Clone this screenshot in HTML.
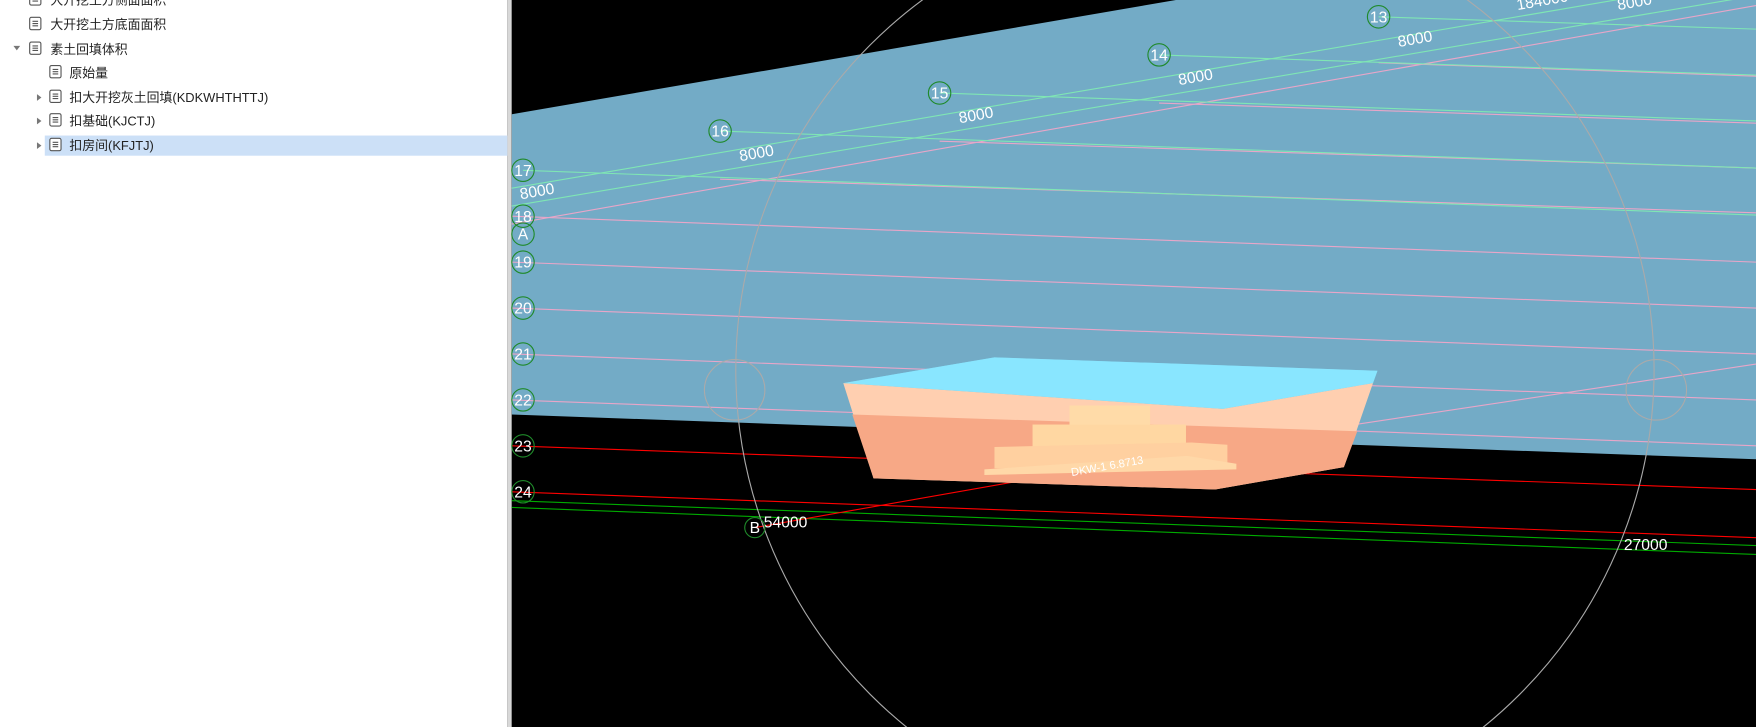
<!DOCTYPE html>
<html><head><meta charset="utf-8"><style>
html,body{margin:0;padding:0;width:1756px;height:727px;overflow:hidden;background:#000}
svg{display:block;overflow:hidden}
.t{font-family:"Liberation Sans","Noto Sans CJK SC",sans-serif;font-size:11.5px;fill:#222}
.n{font-family:"Liberation Sans",sans-serif;font-size:14px;fill:#fff}
</style></head><body>
<svg width="1756" height="727" viewBox="0 0 1568 649" preserveAspectRatio="none" xmlns="http://www.w3.org/2000/svg">
<defs>
<g id="ic"><rect x="0.5" y="0.5" width="10" height="11" rx="1.5" fill="#fff" stroke="#555"/><path d="M3 4h5M3 6h5M3 8h5" stroke="#555"/></g>
</defs>
<rect x="0" y="0" width="453" height="649" fill="#fff"/>
<rect x="453" y="0" width="4" height="649" fill="#d8d8d8"/>
<rect x="40" y="121" width="413" height="18" fill="#cce0f7"/>
<use href="#ic" x="26" y="-7"/><text class="t" x="45" y="4">大开挖土方侧面面积</text>
<use href="#ic" x="26" y="15"/><text class="t" x="45" y="26">大开挖土方底面面积</text>
<path d="M12 41l6 0l-3 4z" fill="#777"/>
<use href="#ic" x="26" y="37"/><text class="t" x="45" y="48">素土回填体积</text>
<use href="#ic" x="44" y="58"/><text class="t" x="62" y="69">原始量</text>
<path d="M33 84l4 3l-4 3z" fill="#777"/>
<use href="#ic" x="44" y="80"/><text class="t" x="62" y="91">扣大开挖灰土回填(KDKWHTHTTJ)</text>
<path d="M33 105l4 3l-4 3z" fill="#777"/>
<use href="#ic" x="44" y="101"/><text class="t" x="62" y="112">扣基础(KJCTJ)</text>
<path d="M33 127l4 3l-4 3z" fill="#777"/>
<use href="#ic" x="44" y="123"/><text class="t" x="62" y="134">扣房间(KFJTJ)</text>

<rect x="457" y="0" width="1111" height="649" fill="#000"/>
<polygon points="457,102 1050,0 1568,0 1568,410 457,370" fill="#73abc6"/>
<g stroke="#e8a6c8" stroke-width="1">
<line x1="457" y1="193" x2="1568" y2="234"/>
<line x1="457" y1="234" x2="1568" y2="275"/>
<line x1="457" y1="275" x2="1568" y2="316"/>
<line x1="457" y1="316" x2="1568" y2="357"/>
<line x1="457" y1="357" x2="1568" y2="398"/>
<line x1="643" y1="160" x2="1568" y2="190"/>
<line x1="839" y1="126" x2="1568" y2="150"/>
<line x1="1035" y1="92" x2="1568" y2="110"/>
<line x1="1231" y1="56" x2="1568" y2="68"/>
<line x1="457" y1="200" x2="1568" y2="5"/>
<line x1="1170" y1="385" x2="1568" y2="325"/>
</g>
<g stroke="#7fe6b4" stroke-width="1">
<line x1="467" y1="152" x2="1568" y2="192"/>
<line x1="643" y1="117" x2="1568" y2="150"/>
<line x1="839" y1="83" x2="1568" y2="108"/>
<line x1="1035" y1="49" x2="1568" y2="67"/>
<line x1="1231" y1="15" x2="1568" y2="26"/>
<line x1="457" y1="168" x2="1560" y2="-20"/>
<line x1="457" y1="184" x2="1568" y2="-4"/>
</g>
<g stroke-width="1">
<line x1="457" y1="398" x2="1568" y2="437" stroke="#f00"/>
<line x1="457" y1="439" x2="1568" y2="480" stroke="#f00"/>
<line x1="457" y1="447" x2="1568" y2="487" stroke="#0a0"/>
<line x1="457" y1="453" x2="1568" y2="495" stroke="#0a0"/>
<line x1="674" y1="471" x2="935" y2="425" stroke="#f00"/>
<line x1="838" y1="410" x2="1120" y2="420" stroke="#f00"/>
</g>
<g fill="none" stroke="#aaa" stroke-width="1">
<circle cx="1067" cy="330" r="410"/>
<circle cx="656" cy="348" r="27"/>
<circle cx="1479" cy="348" r="27"/>
</g>
<polygon points="753,342 888,319 1230,331 1226,342 1092,365" fill="#80e4ff"/>
<polygon points="753,342 1092,365 1226,342 1200,417 1085,437 780,427" fill="#ffcfb0"/>
<polygon points="761,370 1212,385 1200,417 1085,437 780,427" fill="#f7a886"/>
<polygon points="753,342 888,319 1230,331 1226,342 1092,365" fill="#8fe8ff" opacity="0.6"/>
<rect x="955" y="362" width="72" height="22" fill="#ffdba8"/>
<rect x="922" y="379" width="137" height="25" fill="#ffd7a2"/>
<polygon points="888,399 1064,395 1096,397 1096,418 888,418" fill="#ffd0a0"/>
<polygon points="879,419 1060,407 1104,414 1104,419 879,424" fill="#ffd8a8"/>
<text x="957" y="425" transform="rotate(-10 957 425)" style="font-family:'Liberation Sans',sans-serif;font-size:10px;fill:#fff">DKW-1 6.8713</text>
<g class="n">
<text x="465" y="178" transform="rotate(-10 465 178)">8000</text>
<text x="661" y="144" transform="rotate(-10 661 144)">8000</text>
<text x="857" y="110" transform="rotate(-10 857 110)">8000</text>
<text x="1053" y="76" transform="rotate(-10 1053 76)">8000</text>
<text x="1249" y="42" transform="rotate(-10 1249 42)">8000</text>
<text x="1445" y="9" transform="rotate(-10 1445 9)">8000</text>
<text x="1355" y="9" transform="rotate(-10 1355 9)">184000</text>
<text x="682" y="471">54000</text>
<text x="1450" y="491">27000</text>
</g>
<g fill="none" stroke="#1f8a2a" stroke-width="1">
<circle cx="1231" cy="15" r="10"/><circle cx="1035" cy="49" r="10"/><circle cx="839" cy="83" r="10"/><circle cx="643" cy="117" r="10"/>
<circle cx="467" cy="152" r="10"/><circle cx="467" cy="193" r="10"/><circle cx="467" cy="209" r="10"/><circle cx="467" cy="234" r="10"/>
<circle cx="467" cy="275" r="10"/><circle cx="467" cy="316" r="10"/><circle cx="467" cy="357" r="10"/><circle cx="467" cy="398" r="10"/>
<circle cx="467" cy="439" r="10"/><circle cx="674" cy="471" r="9"/>
</g>
<g class="n" text-anchor="middle">
<text x="1231" y="20">13</text><text x="1035" y="54">14</text><text x="839" y="88">15</text><text x="643" y="122">16</text>
<text x="467" y="157">17</text><text x="467" y="198">18</text><text x="467" y="214">A</text><text x="467" y="239">19</text>
<text x="467" y="280">20</text><text x="467" y="321">21</text><text x="467" y="362">22</text><text x="467" y="403">23</text>
<text x="467" y="444">24</text><text x="674" y="476">B</text>
</g>
</svg>
</body></html>
